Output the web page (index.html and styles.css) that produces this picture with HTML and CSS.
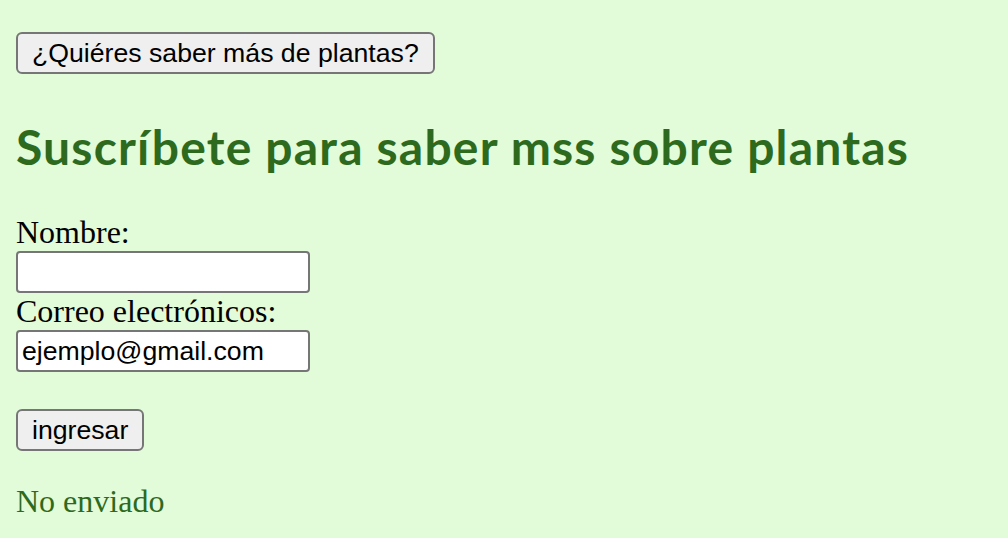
FILE: index.html
```html
<!DOCTYPE html>
<html lang="es">
<head>
<meta charset="utf-8">
<title>Plantas</title>
<link rel="stylesheet" href="styles.css">
</head>
<body>
<div class="intro"><button class="btn" type="button">¿Quiéres saber más de plantas?</button></div>
<h2 class="title">Suscríbete para saber mss sobre plantas</h2>
<form class="form">
<label class="label" for="nombre">Nombre:</label><br>
<input class="field" id="nombre" type="text"><br>
<label class="label" for="correo">Correo electrónicos:</label><br>
<input class="field" id="correo" type="text" value="ejemplo@gmail.com"><br><br>
<input class="btn" type="submit" value="ingresar">
</form>
<p class="status">No enviado</p>
</body>
</html>
```
FILE: styles.css
```css
html {
  background: #e2fbd8;
}
body {
  margin: 16px;
  font-family: "Liberation Serif", "Times New Roman", serif;
  font-size: 32px;
  color: #000;
}
.intro {
  margin: 16px 0 32px;
}
.btn {
  font-family: "Liberation Sans", Arial, sans-serif;
  font-size: 26.67px;
  color: #000;
  background: #efefef;
  border: 2px solid #767676;
  border-radius: 6px;
  padding: 2px 14px;
  margin: 0;
  height: 42px;
  box-sizing: border-box;
}
.title {
  font-family: Lato, "Open Sans", sans-serif;
  font-weight: 700;
  font-size: 48px;
  line-height: 56px;
  letter-spacing: 1.2px;
  color: #2d6a1e;
  margin: 45px 0 39px;
}
.form {
  margin: 0;
}
.field {
  font-family: "Liberation Sans", Arial, sans-serif;
  font-size: 26.67px;
  color: #000;
  width: 294px;
  height: 42px;
  box-sizing: border-box;
  padding: 2px 4px;
  margin: 0;
  border: 2px solid #767676;
  border-radius: 4px;
  background: #fff;
}
.status {
  color: #2d6a1e;
  margin: 32px 0;
}
```
